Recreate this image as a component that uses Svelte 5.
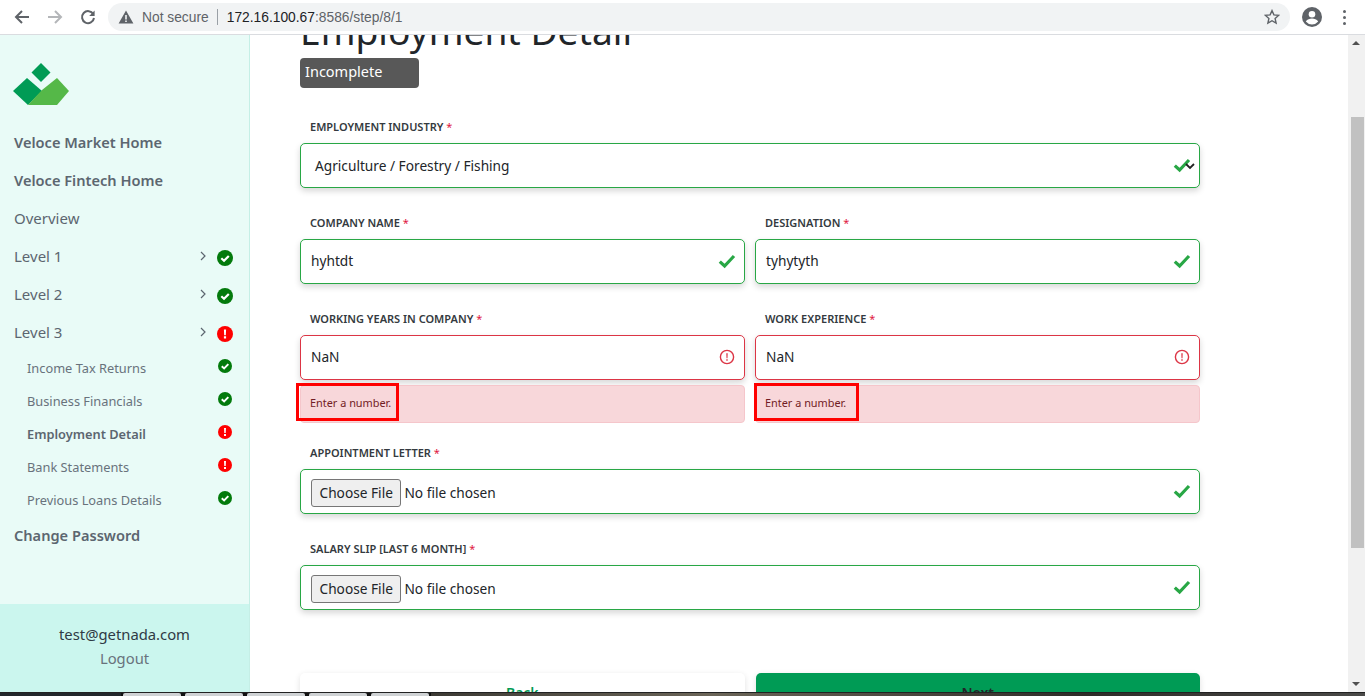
<script>
  const menu = [
    { t: 'Veloce Market Home', c: 'b' },
    { t: 'Veloce Fintech Home', c: 'b' },
    { t: 'Overview', c: '' },
    { t: 'Level 1', c: '', arrow: true, s: 'ok' },
    { t: 'Level 2', c: '', arrow: true, s: 'ok' },
    { t: 'Level 3', c: '', arrow: true, s: 'err' }
  ];
  const sub = [
    { t: 'Income Tax Returns', s: 'ok' },
    { t: 'Business Financials', s: 'ok' },
    { t: 'Employment Detail', s: 'err', b: true },
    { t: 'Bank Statements', s: 'err' },
    { t: 'Previous Loans Details', s: 'ok' }
  ];
</script>

{#snippet status(kind, size)}
  <svg class="status" width={size} height={size} viewBox="0 0 16 16">
    {#if kind === 'ok'}
      <circle cx="8" cy="8" r="8" fill="#037a0c" />
      <path d="M4.3 8.3 7 10.8 11.8 5.9" fill="none" stroke="#fff" stroke-width="2.2" />
    {:else}
      <circle cx="8" cy="8" r="8" fill="#f00" />
      <path d="M6.9 3.4h2.2l-.3 5.8H7.2zM6.9 10.3h2.2v2.2H6.9z" fill="#fff" />
    {/if}
  </svg>
{/snippet}

{#snippet check()}
  <svg class="check" width="18" height="16" viewBox="0 0 18 16">
    <path d="M1.8 8.6 6.6 13 16 3" fill="none" stroke="#28a745" stroke-width="3.2" />
  </svg>
{/snippet}

{#snippet alert()}
  <svg class="alert" width="16" height="16" viewBox="0 0 16 16">
    <circle cx="8" cy="8" r="6.6" fill="none" stroke="#dc3545" stroke-width="1.4" />
    <path d="M7.3 4.2h1.4l-.2 5H7.500zM7.3 10.3h1.4v1.5H7.3z" fill="#dc3545" />
  </svg>
{/snippet}

{#snippet label(text)}
  <div class="label">{text} <span class="req">*</span></div>
{/snippet}

{#snippet filefield(text)}
  <div class="field">
    {@render label(text)}
    <div class="box ok file">
      <span class="choose">Choose File</span>
      <span class="nofile">No file chosen</span>
      {@render check()}
    </div>
  </div>
{/snippet}

<div class="page">
  <header class="chrome">
    <div class="navs">
      <svg width="16" height="16" viewBox="0 0 16 16"><path d="M15 8H2M8 2 2 8l6 6" fill="none" stroke="#5f6368" stroke-width="2" /></svg>
      <svg width="16" height="16" viewBox="0 0 16 16"><path d="M1 8h13M8 2l6 6-6 6" fill="none" stroke="#b4b6b9" stroke-width="2" /></svg>
      <svg width="16" height="16" viewBox="0 0 16 16"><path d="M13.3 5.2A6 6 0 1 0 14 9" fill="none" stroke="#5f6368" stroke-width="2" /><path d="M14.6 1.5v5.4H9.2z" fill="#5f6368" /></svg>
    </div>
    <div class="omni">
      <svg width="16" height="14" viewBox="0 0 16 14"><path d="M8 .5 15.4 13.5H.6zM7.2 5v4.4h1.6V5zM7.2 10.4V12h1.6v-1.6z" fill="#5f6368" fill-rule="evenodd" /></svg>
      <span class="insecure">Not secure</span>
      <span class="sep"></span>
      <span class="url"><b>172.16.100.67</b>:8586/step/8/1</span>
      <svg class="star" width="16" height="16" viewBox="0 0 16 16"><path d="m8 1.6 1.9 4.3 4.7.5-3.5 3.1 1 4.6L8 11.7l-4.1 2.4 1-4.6L1.400 6.400l4.700-.5z" fill="none" stroke="#5f6368" stroke-width="1.400" /></svg>
    </div>
    <svg class="avatar" width="20" height="20" viewBox="0 0 20 20"><circle cx="10" cy="10" r="10" fill="#5f6368" /><circle cx="10" cy="7.300" r="3.300" fill="#fff" /><path d="M3.800 14.500c1.500-2.300 3.800-3 6.200-3s4.700.7 6.200 3a8 8 0 0 1-12.400 0z" fill="#fff" /></svg>
    <div class="dots"><i></i><i></i><i></i></div>
  </header>

  <div class="body">
    <aside class="side">
      <div class="nav">
        <svg class="logo" width="58" height="44" viewBox="0 0 58 44">
          <path d="M28 0 37.500 9.500 28 19 18.500 9.500z" fill="#009b55" />
          <path d="M14 15 29 28 15 42 0 28z" fill="#009b55" />
          <path d="M29 27 44 15 56 28 44 42H15z" fill="#55b848" />
        </svg>
        <ul class="menu">
          {#each menu as m}
            <li class={m.c}>
              <span class="grow">{m.t}</span>
              {#if m.arrow}
                <svg class="chev" width="8" height="10" viewBox="0 0 8 10"><path d="m2 1 4 4-4 4" fill="none" stroke="#5c6670" stroke-width="1.200" /></svg>
                {@render status(m.s, 16)}
              {/if}
            </li>
          {/each}
        </ul>
        <ul class="submenu">
          {#each sub as s}
            <li class:b={s.b}><span class="grow">{s.t}</span>{@render status(s.s, 14)}</li>
          {/each}
        </ul>
        <div class="change">Change Password</div>
      </div>
      <div class="user">
        <div class="email">test@getnada.com</div>
        <div class="logout">Logout</div>
      </div>
    </aside>

    <main class="main">
      <div class="content">
        <h1>Employment Detail</h1>
        <div class="badge">Incomplete</div>

        <div class="field first">
          {@render label('EMPLOYMENT INDUSTRY')}
          <div class="box ok select">
            <span>Agriculture / Forestry / Fishing</span>
            {@render check()}
            <svg class="caret" width="10" height="7" viewBox="0 0 10 7"><path d="m1 1 4 4 4-4" fill="none" stroke="#222" stroke-width="1.800" /></svg>
          </div>
        </div>

        <div class="row">
          <div class="field">
            {@render label('COMPANY NAME')}
            <div class="box ok"><span class="val">hyhtdt</span>{@render check()}</div>
          </div>
          <div class="field">
            {@render label('DESIGNATION')}
            <div class="box ok"><span class="val">tyhytyth</span>{@render check()}</div>
          </div>
        </div>

        <div class="row errs">
          <div class="field">
            {@render label('WORKING YEARS IN COMPANY')}
            <div class="box bad"><span class="val">NaN</span>{@render alert()}</div>
            <div class="error"><span class="mark">Enter a number.</span></div>
          </div>
          <div class="field">
            {@render label('WORK EXPERIENCE')}
            <div class="box bad"><span class="val">NaN</span>{@render alert()}</div>
            <div class="error"><span class="mark second">Enter a number.</span></div>
          </div>
        </div>

        {@render filefield('APPOINTMENT LETTER')}
        {@render filefield('SALARY SLIP [LAST 6 MONTH]')}

        <div class="actions">
          <div class="btn back">Back</div>
          <div class="btn next">Next</div>
        </div>
      </div>
    </main>

    <div class="scrollbar">
      <div class="arrow up"></div>
      <div class="track"><div class="thumb"></div></div>
      <div class="arrow down"></div>
    </div>
  </div>

  <div class="taskbar">
    <div class="tb-start"></div>
    {#each [0, 1, 2, 3, 4] as i}<div class="tb-item"></div>{/each}
    <div class="tb-rest"></div>
  </div>
</div>

<style>
  :global(body) { margin: 0; background: #fff; }
  .page {
    width: 1365px; height: 696px; overflow: hidden;
    display: flex; flex-direction: column;
    font-family: "Noto Sans", "Open Sans", sans-serif; color: #212529;
  }
  .chrome {
    height: 35px; flex: none; display: flex; align-items: center; box-sizing: border-box;
    background: #fff; border-bottom: 1px solid #dadce0;
  }
  .navs { display: flex; gap: 17px; margin-left: 14px; width: 94px; align-items: center; }
  .omni {
    width: 1182px; height: 28px; border-radius: 14px; background: #f1f3f4;
    display: flex; align-items: center; padding: 0 10px; box-sizing: border-box;
    font: 13.8px "Liberation Sans", Arial, sans-serif; flex: none;
  }
  .insecure { margin-left: 8px; color: #5f6368; }
  .sep { width: 1px; height: 16px; background: #9aa0a6; margin: 0 9px 0 8px; }
  .url { color: #5f6368; }
  .url b { font-weight: 400; color: #202124; }
  .star { margin-left: auto; }
  .avatar { margin-left: 12px; }
  .dots { margin-left: 21px; display: flex; flex-direction: column; gap: 3px; }
  .dots i { width: 3px; height: 3px; border-radius: 50%; background: #5f6368; display: block; }

  .body { flex: 1; min-height: 0; display: flex; }
  .side {
    width: 250px; flex: none; box-sizing: border-box; display: flex; flex-direction: column;
    background: #e9fbf7; border-right: 1px solid #c5efe6;
  }
  .nav { flex: 1; padding: 28px 16px 0 14px; }
  .logo { display: block; margin-bottom: 16px; margin-left: -1px; }
  .menu, .submenu { list-style: none; margin: 0; padding: 0; }
  .menu li {
    height: 38px; display: flex; align-items: center;
    font-size: 15px; color: #5c6670;
  }
  .menu li.b, .change { font-weight: 600; font-size: 14.6px; color: #5c6670; }
  .grow { flex: 1; }
  .chev { margin-right: 10px; margin-top: -1px; }
  .menu .status { margin-top: 4px; }
  .submenu { padding-left: 13px; }
  .submenu li {
    height: 33px; display: flex; align-items: center;
    font-size: 12.8px; color: #68727c;
  }
  .submenu li .status { margin-right: 1px; margin-top: -3px; }
  .submenu li.b { font-weight: 600; color: #5c6670; }
  .change { height: 38px; line-height: 38px; }
  .user {
    height: 88px; flex: none; background: #cbf6ee; text-align: center;
    padding-top: 19px; box-sizing: border-box; font-size: 14.8px;
  }
  .email { color: #2f3a45; height: 24px; line-height: 22px; }
  .logout { color: #68727c; line-height: 22px; }

  .main { flex: 1; min-width: 0; overflow: hidden; background: #fff; }
  .content { width: 900px; margin: -28px 0 0 50px; }
  h1 { margin: 0; font-size: 37.2px; font-weight: 400; line-height: 48px; color: #212529; }
  .badge {
    width: 119px; height: 30px; margin-top: 3px; box-sizing: border-box; border-radius: 4px;
    background: #585858; color: #fff; font-size: 14.5px; line-height: 27px; padding-left: 5px;
  }
  .field { flex: 1; min-width: 0; margin-bottom: 26px; }
  .field.first { margin-top: 30px; }
  .row { display: flex; gap: 10px; }
  .errs .field { margin-bottom: 21px; }
  .label {
    font-size: 11px; font-weight: 600; color: #343a40; padding-left: 10px;
    height: 20px; line-height: 18px; margin-bottom: 5px;
  }
  .req { color: #e0173f; font-weight: 400; }
  .box {
    height: 45px; box-sizing: border-box; border-radius: 5px; background: #fff;
    display: flex; align-items: center; padding: 0 8px 0 10px;
    font-size: 13.7px; color: #212529; box-shadow: 0 3px 6px rgba(0, 0, 0, .16);
  }
  .box.ok { border: 1px solid #28a745; }
  .box.bad { border: 1px solid #dc3545; }
  .box > span:first-child { flex: 1; }
  .box > .val { margin-top: -2px; }
  .check { margin-top: -2px; }
  .box.select { padding-left: 14px; position: relative; }
  .caret { position: absolute; right: 4px; top: 19px; }
  .alert { margin-right: 1px; margin-top: -2px; }
  .box.file > .choose {
    flex: none; height: 28px; padding: 0 7.5px; margin-top: 3px; box-sizing: border-box; line-height: 25px;
    background: #efefef; border: 1px solid #767676; border-radius: 3px; color: #212529;
  }
  .file .nofile { flex: 1; margin-left: 3px; margin-top: 2px; }
  .error {
    height: 38px; box-sizing: border-box; margin-top: 5px; border-radius: 4px; padding-bottom: 4px;
    background: #f8d7da; border: 1px solid #f5c6cb;
    display: flex; align-items: center; padding-left: 9px; font-size: 10.9px; color: #721c24;
  }
  .mark { position: relative; }
  .mark::after {
    content: ""; position: absolute; left: -14px; top: -12px; right: -8px; bottom: -11px;
    border: 3px solid #f00;
  }
  .mark.second::after { left: -11px; right: -13px; }
  .actions { display: flex; gap: 11px; margin-top: 63px; }
  .btn {
    flex: 1; height: 46px; border-radius: 5px; text-align: center; font-size: 14px; font-weight: 600;
    line-height: 40px; box-shadow: 0 2px 6px rgba(0, 0, 0, .12);
  }
  .back { background: #fff; color: #009b55; }
  .next { background: #009b55; color: #212529; }

  .scrollbar { width: 17px; flex: none; background: #f1f1f1; display: flex; flex-direction: column; }
  .arrow { height: 17px; flex: none; position: relative; }
  .arrow::after {
    content: ""; position: absolute; left: 4px; width: 0; height: 0;
    border-left: 4px solid transparent; border-right: 4px solid transparent;
  }
  .up::after { top: 6px; border-bottom: 4px solid #505050; }
  .down::after { bottom: 6px; border-top: 4px solid #505050; }
  .track { flex: 1; padding-top: 65px; }
  .thumb { width: 13px; margin-left: 3px; height: 431px; background: #c1c1c1; }

  .taskbar {
    height: 4px; flex: none; display: flex; background: #111; border-top: 1px solid #222; box-sizing: border-box;
  }
  .tb-start { width: 121px; background: #23282c; }
  .tb-item { width: 58px; margin: 0 2px 0 2px; background: #cfd2d4; border-radius: 2px 2px 0 0; }
  .tb-rest { flex: 1; background: linear-gradient(90deg, #3c3a34, #6b6558 30%, #2e2c28 70%, #4a4a48); }
</style>
